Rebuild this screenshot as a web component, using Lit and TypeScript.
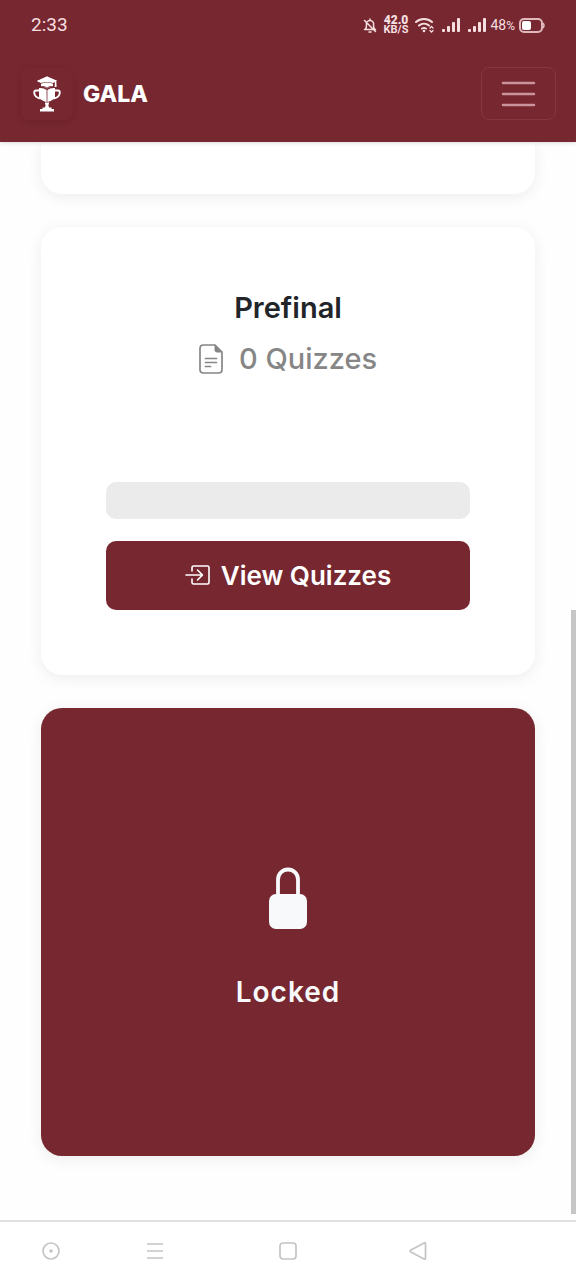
import { LitElement, html, svg, css } from "lit";
import { customElement } from "lit/decorators.js";

@customElement("status-bar")
class StatusBar extends LitElement {
  static styles = css`
    :host { display: flex; align-items: center; justify-content: space-between; height: 50px; padding: 0 31px; color: #f6dfe1; }
    .time { font: 400 19px/24px Roboto, sans-serif; }
    .icons { display: flex; align-items: center; gap: 7px; }
    .speed { font: 700 11px/10px Roboto, sans-serif; text-align: center; }
    .speed b { display: block; font-size: 12px; }
    .signal { display: flex; gap: 7px; }
    .power { display: flex; align-items: center; gap: 4px; font: 400 14px/20px Roboto, sans-serif; margin-left: -4px; }
    .power small { font-size: 12px; }
    svg { display: block; }
  `;
  bars() {
    return html`<svg width="19" height="15" viewBox="0 0 19 15" fill="currentColor" aria-hidden="true">
      <rect x="0" y="11" width="3" height="3" rx="1" /><rect x="5" y="8" width="3" height="6" rx="1" />
      <rect x="10" y="4" width="3" height="10" rx="1" /><rect x="15" y="0" width="3" height="14" rx="1" />
    </svg>`;
  }
  render() {
    return html`
      <span class="time">2:33</span>
      <div class="icons">
        <svg width="14" height="15" viewBox="0 0 14 15" fill="none" stroke="currentColor" stroke-width="1.5" stroke-linecap="round" stroke-linejoin="round" aria-hidden="true">
          <path d="M7 1v1M1.5 11.5h11M2.5 11c.8-1 1-2 1-4A3.5 3.5 0 0 1 7 2.5 3.5 3.5 0 0 1 10.5 7c0 2 .2 3 1 4M6 14h2M1.5 2.500l11 11" />
        </svg>
        <div class="speed"><b>42.0</b>KB/S</div>
        <svg width="20" height="16" viewBox="0 0 20 16" fill="none" stroke="currentColor" stroke-width="2" stroke-linecap="round" aria-hidden="true">
          <path d="M1 5a12 12 0 0 1 16 0M4 8.500a8 8 0 0 1 10 0M7 11.500a4 4 0 0 1 4 0" />
          <circle cx="9" cy="14" r="1.300" fill="currentColor" stroke="none" />
          <path d="M15 11l1.500-1.500L18 11M15 13.500l1.500 1.500 1.500-1.500" stroke-width="1.300" />
        </svg>
        <div class="signal">${this.bars()}${this.bars()}</div>
        <div class="power">
          <span>48<small>%</small></span>
          <svg width="26" height="15" viewBox="0 0 26 15" aria-hidden="true">
            <rect x="1" y="1" width="22" height="13" rx="4" fill="none" stroke="#e0b9bd" stroke-width="2" />
            <path d="M24 5q2 2.500 0 5" fill="none" stroke="#e0b9bd" stroke-width="1.500" />
            <rect x="3" y="3" width="9" height="9" rx="2" fill="#fff" />
          </svg>
        </div>
      </div>`;
  }
}

@customElement("nav-header")
class NavHeader extends LitElement {
  static styles = css`
    :host { display: flex; align-items: center; justify-content: space-between; height: 92px; padding: 0 20px 0 21px; }
    .brand { display: flex; align-items: center; gap: 10px; color: #fff; text-decoration: none; font: 800 23px/36px Inter, sans-serif; padding-bottom: 4px; }
    .logo { display: grid; place-items: center; width: 52px; height: 52px; border-radius: 8px; box-shadow: 0 2px 6px rgba(50, 0, 8, 0.15); }
    .toggle { display: grid; place-items: center; width: 75px; height: 53px; margin-bottom: 5px; padding: 0; border: 1px solid #86363f; border-radius: 8px; background: none; color: #cb939b; }
  `;
  render() {
    return html`
      <a class="brand" href="#">
        <span class="logo">
          <svg width="28" height="36" viewBox="0 0 28 36" fill="#fff" aria-hidden="true">
            <path d="M14 .5l10 4.200-3 1.600q-3.500-1.300-7-1.300t-7 1.300L4 5z" />
            <path d="M4 5l10-4.500L24 5l-4 2q-6-2-12 0z" />
            <path d="M8 7.700q6-2.200 12 0v3.300q-3.500-.6-6 1.500-2.500-2.100-6-1.500z" />
            <path d="M22 5.500h1.300l.3 5.500h-2z" />
            <path d="M6 12q5-.3 7.600 2v12q-6-1.300-7.600-5z" />
            <path d="M22 12q-5-.3-7.600 2v12q6-1.300 7.600-5z" />
            <path d="M6 14.500H3Q1.200 14.500 1.200 16.500q.3 5 6.300 6M22 14.500h3q1.800 0 1.800 2-.3 5-6.300 6" fill="none" stroke="#fff" stroke-width="1.900" />
            <path d="M12 26.500h4v1.500l-.7 1 1 3h-4.600l1-3-.7-1z" />
            <path d="M9.500 31.500h9v1.500h2.500v2.500H7V33h2.500z" />
            <path d="M8 10.500q3.500-.8 6 1.500 2.500-2.300 6-1.500" fill="none" stroke="#772730" stroke-width=".8" />
          </svg>
        </span>
        GALA
      </a>
      <button class="toggle" aria-label="Toggle navigation">
        <svg width="36" height="26" viewBox="0 0 36 26" fill="none" stroke="currentColor" stroke-width="2.500" stroke-linecap="round" aria-hidden="true">
          <path d="M2 2h31M2 13h31M2 24h31" />
        </svg>
      </button>`;
  }
}

const systemShapes = {
  assist: svg`<circle cx="10" cy="10" r="8" /><circle cx="10" cy="10" r="1.800" fill="currentColor" stroke="none" />`,
  menu: svg`<path d="M2 3h16M2 10h16M2 17h16" />`,
  home: svg`<rect x="2" y="2" width="16" height="16" rx="3" />`,
  back: svg`<path d="M16.500 1.800q1-.3 1 .7v15q0 1-1 .7l-14-7.500q-1-.7 0-1.400z" />`,
};

@customElement("system-nav")
class SystemNav extends LitElement {
  static styles = css`
    :host { display: grid; grid-template-columns: 102fr 106fr 160fr 100fr 108fr; align-items: center; height: 58px; border-top: 2px solid #e0e2e1; background: #fff; }
    button { display: grid; place-items: center; padding: 0; border: 0; background: none; color: #c4c4c4; }
  `;
  render() {
    const icon = (shape: unknown) => html`<svg width="20" height="20" viewBox="0 0 20 20" fill="none" stroke="currentColor" stroke-width="1.700" stroke-linejoin="round" aria-hidden="true">${shape}</svg>`;
    return html`
      <button aria-label="Assist">${icon(systemShapes.assist)}</button>
      <button aria-label="Menu">${icon(systemShapes.menu)}</button>
      <button aria-label="Home">${icon(systemShapes.home)}</button>
      <button aria-label="Back">${icon(systemShapes.back)}</button>`;
  }
}

@customElement("app-root")
class AppRoot extends LitElement {
  static styles = css`
    :host { display: flex; flex-direction: column; height: 100vh; background: #fefefe; font-family: Inter, sans-serif; }
    .top { position: relative; z-index: 1; background: #772730; box-shadow: 0 1px 4px rgba(0, 0, 0, 0.14); }
    main { position: relative; flex: 1; overflow: hidden; display: flex; flex-direction: column; gap: 33px; padding: 0 41px; }
    .card { box-sizing: border-box; flex: none; height: 448px; border-radius: 21px; background: #fff; box-shadow: 0 3px 16px rgba(0, 0, 0, 0.07); display: flex; flex-direction: column; align-items: center; }
    .previous { height: 52px; border-radius: 0 0 21px 21px; }
    .quiz { padding: 60px 65px 65px; }
    h2 { margin: 0; font-size: 29px; line-height: 42px; font-weight: 600; color: #212529; }
    .count { display: flex; align-items: center; gap: 16px; margin: 8px 0 0; font-size: 29px; line-height: 44px; font-weight: 500; color: #868686; }
    .track { width: 100%; height: 37px; margin-top: auto; border-radius: 10px; background: #ebebeb; }
    .view { display: flex; align-items: center; justify-content: center; gap: 10px; width: 100%; height: 69px; margin-top: 22px; border-radius: 10px; background: #772730; color: #fff; text-decoration: none; font-size: 26px; line-height: 39px; font-weight: 600; }
    .view svg { margin-bottom: 2px; }
    .locked { justify-content: center; gap: 42px; padding-top: 15px; background: #772730; color: #f8f9fa; }
    .locked h2 { color: #f8f9fa; font-size: 28px; letter-spacing: 1px; }
    .thumb { position: absolute; right: 0; bottom: 6px; width: 5px; height: 56%; background: #c6c6c6; }
  `;
  render() {
    return html`
      <div class="top">
        <status-bar></status-bar>
        <nav-header></nav-header>
      </div>
      <main>
        <section class="card previous"></section>
        <section class="card quiz">
          <h2>Prefinal</h2>
          <p class="count">
            <svg width="24" height="30" viewBox="0 0 24 30" fill="none" stroke="currentColor" stroke-width="1.700" aria-hidden="true">
              <path d="M16 1H4.500Q1 1 1 4.500v21Q1 29 4.500 29h15q3.500 0 3.500-3.500V8z" />
              <path d="M15.500.5L23.500 8.500h-5q-3 0-3-3z" fill="currentColor" stroke="none" />
              <path d="M6.500 14.500h11M6.500 18.500h11M6.500 22.500h5" stroke-linecap="round" />
            </svg>
            0 Quizzes
          </p>
          <div class="track" role="progressbar" aria-label="Quiz progress" aria-valuenow="0"></div>
          <a class="view" href="#">
            <svg width="26" height="20" viewBox="0 0 26 20" fill="none" stroke="currentColor" stroke-width="1.600" stroke-linecap="round" stroke-linejoin="round" aria-hidden="true">
              <path d="M7 6V2.500Q7 1 8.500 1h14Q24 1 24 2.500v15q0 1.500-1.500 1.500h-14Q7 19 7 17.500V14M1 10h16.500M12.500 5l5 5-5 5" />
            </svg>
            View Quizzes
          </a>
        </section>
        <section class="card locked">
          <svg width="40" height="62" viewBox="0 0 40 62" aria-hidden="true">
            <path d="M10 30V12.500a10 10 0 0 1 20 0V30" fill="none" stroke="#f8f9fa" stroke-width="3.800" />
            <rect x="1" y="27" width="38" height="35" rx="7" fill="#f8f9fa" />
          </svg>
          <h2>Locked</h2>
        </section>
        <div class="thumb"></div>
      </main>
      <system-nav></system-nav>`;
  }
}
